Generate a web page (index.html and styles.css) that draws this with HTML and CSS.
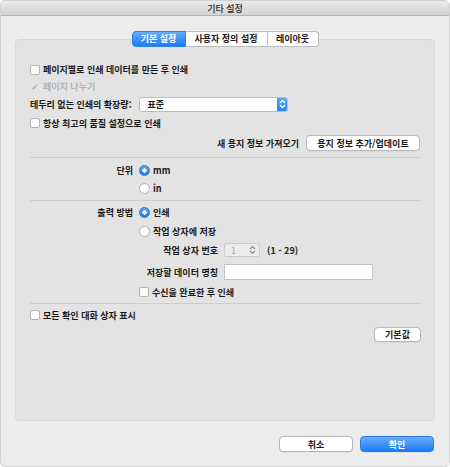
FILE: index.html
```html
<!DOCTYPE html>
<html lang="ko">
<head>
<meta charset="utf-8">
<link rel="stylesheet" href="styles.css">
</head>
<body>
<div class="window">
  <div class="titlebar">기타 설정</div>
  <div class="content">
    <div class="tabs">
      <span class="tab active t1">기본 설정</span>
      <span class="tab t2">사용자 정의 설정</span>
      <span class="tab t3">레이아웃</span>
    </div>
    <div class="panel">
      <div class="row r1"><span class="cb"></span><span>페이지별로 인쇄 데이터를 만든 후 인쇄</span></div>
      <div class="row r2 disabled"><span class="check">✓</span><span>페이지 나누기</span></div>
      <div class="row r3">
        <span class="lbl">테두리 없는 인쇄의 확장량:</span>
        <span class="popup"><span class="popup-text">표준</span><span class="popup-arrows"><svg width="7" height="10" viewBox="0 0 7 10"><path d="M1 4 L3.5 1.5 L6 4 M1 6 L3.5 8.5 L6 6" fill="none" stroke="#fff" stroke-width="1.3"/></svg></span></span>
      </div>
      <div class="row r4"><span class="cb"></span><span>항상 최고의 품질 설정으로 인쇄</span></div>
      <div class="row r5 end"><span class="lbl2">새 용지 정보 가져오기</span><span class="btn wide">용지 정보 추가/업데이트</span></div>
      <div class="sep s1"></div>
      <div class="row r6"><span class="lbl">단위</span><span class="radio on"></span><span>mm</span></div>
      <div class="row r7"><span class="lbl"></span><span class="radio"></span><span>in</span></div>
      <div class="sep s2"></div>
      <div class="row r8"><span class="lbl">출력 방법</span><span class="radio on"></span><span>인쇄</span></div>
      <div class="row r9"><span class="lbl"></span><span class="radio"></span><span>작업 상자에 저장</span></div>
      <div class="row r10"><span class="lbl sub">작업 상자 번호</span><span class="stepper"><span class="step-val">1</span><svg width="7" height="10" viewBox="0 0 7 10"><path d="M1 4 L3.5 1.5 L6 4 M1 6 L3.5 8.5 L6 6" fill="none" stroke="#8a8a8a" stroke-width="1.1"/></svg></span><span class="range">(1 - 29)</span></div>
      <div class="row r11"><span class="lbl sub">저장할 데이터 명칭</span><span class="field"></span></div>
      <div class="row r12 indent"><span class="cb"></span><span>수신을 완료한 후 인쇄</span></div>
      <div class="sep s3"></div>
      <div class="row r13"><span class="cb"></span><span>모든 확인 대화 상자 표시</span></div>
      <div class="row r14 end"><span class="btn def">기본값</span></div>
    </div>
    <div class="footer">
      <span class="btn foot">취소</span>
      <span class="btn foot primary">확인</span>
    </div>
  </div>
</div>
</body>
</html>
```
FILE: styles.css
```css
* { box-sizing: border-box; }
html, body { margin: 0; padding: 0; background: #ffffff; }
body {
  font-family: "Noto Sans CJK KR", "Noto Sans", sans-serif;
  font-size: 9px;
  font-weight: 600;
  color: #1a1a1a;
}
.window {
  width: 450px;
  height: 467px;
  background: #ececec;
  border: 1px solid #d2d2d2;
  border-radius: 5px;
  overflow: hidden;
}
.titlebar {
  height: 15px;
  background: linear-gradient(#ebebeb, #d4d4d4);
  border-bottom: 1px solid #b3b3b3;
  text-align: center;
  line-height: 15px;
  font-size: 9px;
  font-weight: 500;
  color: #2a2a2a;
}
.content {
  padding: 15px 14px 0 14px;
}
.tabs {
  display: flex;
  justify-content: center;
  position: relative;
  z-index: 2;
  margin-bottom: -8px;
}
.tab {
  height: 16px;
  line-height: 14px;
  background: #fff;
  border: 1px solid #bdbdbd;
  border-left: none;
  text-align: center;
  color: #1a1a1a;
  font-weight: 600;
}
.t1 { width: 54px; }
.t2 { width: 82px; }
.t3 { width: 51px; }
.tab:first-child { border-left: 1px solid #bdbdbd; border-radius: 4px 0 0 4px; }
.tab:last-child { border-radius: 0 4px 4px 0; }
.tab.active {
  background: linear-gradient(#66acfb, #1a7cf6);
  border-color: #2d7ee8;
  color: #fff;
}
.panel {
  height: 382px;
  background: #e3e3e3;
  border: 1px solid #d9d9d9;
  border-radius: 4px;
  padding: 13px 13px 0 14px;
  display: flex;
  flex-direction: column;
}
.row {
  display: flex;
  align-items: center;
  height: 18px;
  white-space: nowrap;
}
.r1 { height: 17px; margin-top: 8px; }
.r2 { height: 17px; }
.r3 { height: 18px; }
.r4 { height: 20px; }
.r5 { height: 16px; margin-top: 2px; }
.s1 { margin-top: 6px; }
.r6 { margin-top: 3px; }
.s2 { margin-top: 3px; }
.r8 { margin-top: 2px; }
.r9 { height: 20px; }
.r11 { margin-top: 4px; }
.r12 { margin-top: 2px; }
.s3 { margin-top: 2px; }
.r13 { margin-top: 2px; }
.r14 { height: 15px; margin-top: 3px; }
.end { justify-content: flex-end; }
.indent { padding-left: 109px; }
.sep { height: 1px; background: #cdcdcd; flex: none; }
.cb {
  width: 10px;
  height: 10px;
  background: #fff;
  border: 1px solid #b4b4b4;
  border-radius: 2px;
  margin-right: 3px;
  flex: none;
}
.disabled { color: #a9a9a9; font-weight: 500; }
.check {
  width: 10px;
  margin-right: 3px;
  font-size: 9px;
  color: #9a9a9a;
  text-align: center;
  font-family: "DejaVu Sans", sans-serif;
  font-weight: 400;
}
.lbl {
  width: 103px;
  text-align: right;
  margin-right: 6px;
  flex: none;
}
.r3 .lbl { width: auto; text-align: left; margin-right: 7px; }
.lbl.sub { width: 188px; margin-right: 6px; }
.lbl2 { margin-right: 7px; }
.popup {
  width: 149px;
  height: 15px;
  background: #fff;
  border: 1px solid #bcbcbc;
  border-radius: 3px;
  display: flex;
  align-items: center;
  justify-content: space-between;
  overflow: hidden;
}
.popup-text { padding-left: 8px; }
.popup-arrows {
  width: 11px;
  height: 15px;
  margin: -1px -1px -1px 0;
  background: linear-gradient(#5fa8fb, #1f7ff5);
  border-radius: 0 3px 3px 0;
  display: flex;
  align-items: center;
  justify-content: center;
}
.btn {
  display: inline-flex;
  align-items: center;
  justify-content: center;
  height: 16px;
  background: #fff;
  border: 1px solid #b8b8b8;
  border-radius: 4px;
  box-shadow: 0 0.5px 0 rgba(0,0,0,0.08);
  color: #1a1a1a;
}
.btn.wide { width: 114px; margin-right: 1px; }
.btn.def { width: 47px; height: 15px; margin-right: 0; }
.radio {
  width: 11px;
  height: 11px;
  border-radius: 50%;
  background: #fff;
  border: 1px solid #b1b1b1;
  margin-right: 3px;
  flex: none;
}
.radio.on {
  background: radial-gradient(circle, #fff 0 2px, transparent 2.3px), linear-gradient(#5aa6fb, #1a7bf4);
  border-color: #2a7ae6;
}
.stepper {
  width: 36px;
  height: 14px;
  background: #ececec;
  border: 1px solid #cbcbcb;
  border-radius: 3px;
  display: flex;
  align-items: center;
  justify-content: space-between;
  padding: 0 3px 0 6px;
  color: #a5a5a5;
  font-weight: 400;
}
.range { margin-left: 7px; }
.field {
  width: 149px;
  height: 16px;
  background: #fff;
  border: 1px solid #c4c4c4;
}
.footer {
  display: flex;
  justify-content: flex-end;
  gap: 7px;
  margin-top: 15px;
  padding-right: 1px;
}
.btn.foot { width: 74px; }
.btn.primary {
  background: linear-gradient(#69aefb, #1b7cf5);
  border-color: #2b77e0;
  color: #fff;
}
```
